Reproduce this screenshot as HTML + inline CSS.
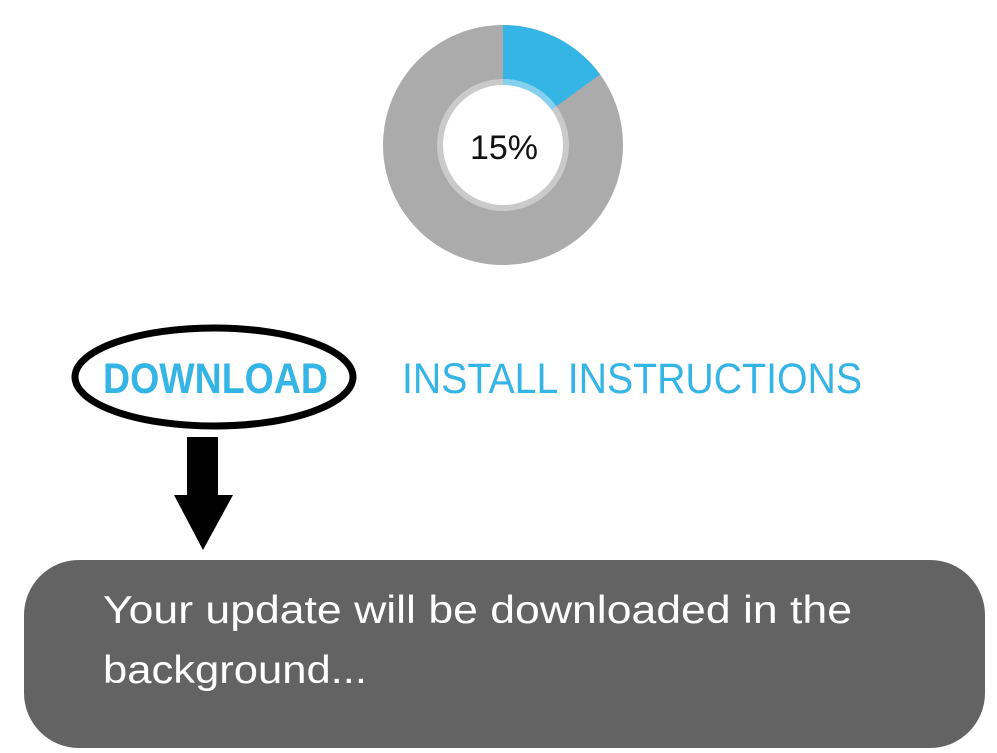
<!DOCTYPE html>
<html><head><meta charset="utf-8"><style>
html,body{margin:0;padding:0;background:#fff;}
svg{display:block;}
</style></head><body>
<svg width="997" height="753" viewBox="0 0 997 753" xmlns="http://www.w3.org/2000/svg">
  <circle cx="503" cy="145" r="120" fill="#ababab"/>
  <path d="M503 145 L503 25 A120 120 0 0 1 600.1 74.5 Z" fill="#35b5e5"/>
  <circle cx="503" cy="145" r="66" fill="#cacaca"/>
  <path d="M503 145 L503 79 A66 66 0 0 1 556.4 106.2 Z" fill="#86d0ef"/>
  <circle cx="503" cy="145" r="60" fill="#fff"/>
  <text x="504" y="159" font-family="Liberation Sans, sans-serif" font-size="34" text-anchor="middle" fill="#111">15%</text>

  <ellipse cx="214" cy="377" rx="139" ry="49" fill="none" stroke="#000" stroke-width="7"/>
  <text x="103" y="393" font-family="Liberation Sans, sans-serif" font-weight="bold" font-size="43" fill="#35b5e5" textLength="225" lengthAdjust="spacingAndGlyphs">DOWNLOAD</text>
  <text x="402" y="393" font-family="Liberation Sans, sans-serif" font-size="43" fill="#35b5e5" textLength="460" lengthAdjust="spacingAndGlyphs">INSTALL INSTRUCTIONS</text>

  <rect x="187" y="437" width="31" height="60" fill="#000"/>
  <polygon points="174,495 233,495 203,550" fill="#000"/>

  <rect x="24" y="560" width="961" height="188" rx="55" ry="55" fill="#636363"/>
  <text x="103" y="623" font-family="Liberation Sans, sans-serif" font-size="39" fill="#fff" textLength="749" lengthAdjust="spacingAndGlyphs">Your update will be downloaded in the</text>
  <text x="103" y="683" font-family="Liberation Sans, sans-serif" font-size="39" fill="#fff" textLength="264" lengthAdjust="spacingAndGlyphs">background...</text>
</svg>
</body></html>
